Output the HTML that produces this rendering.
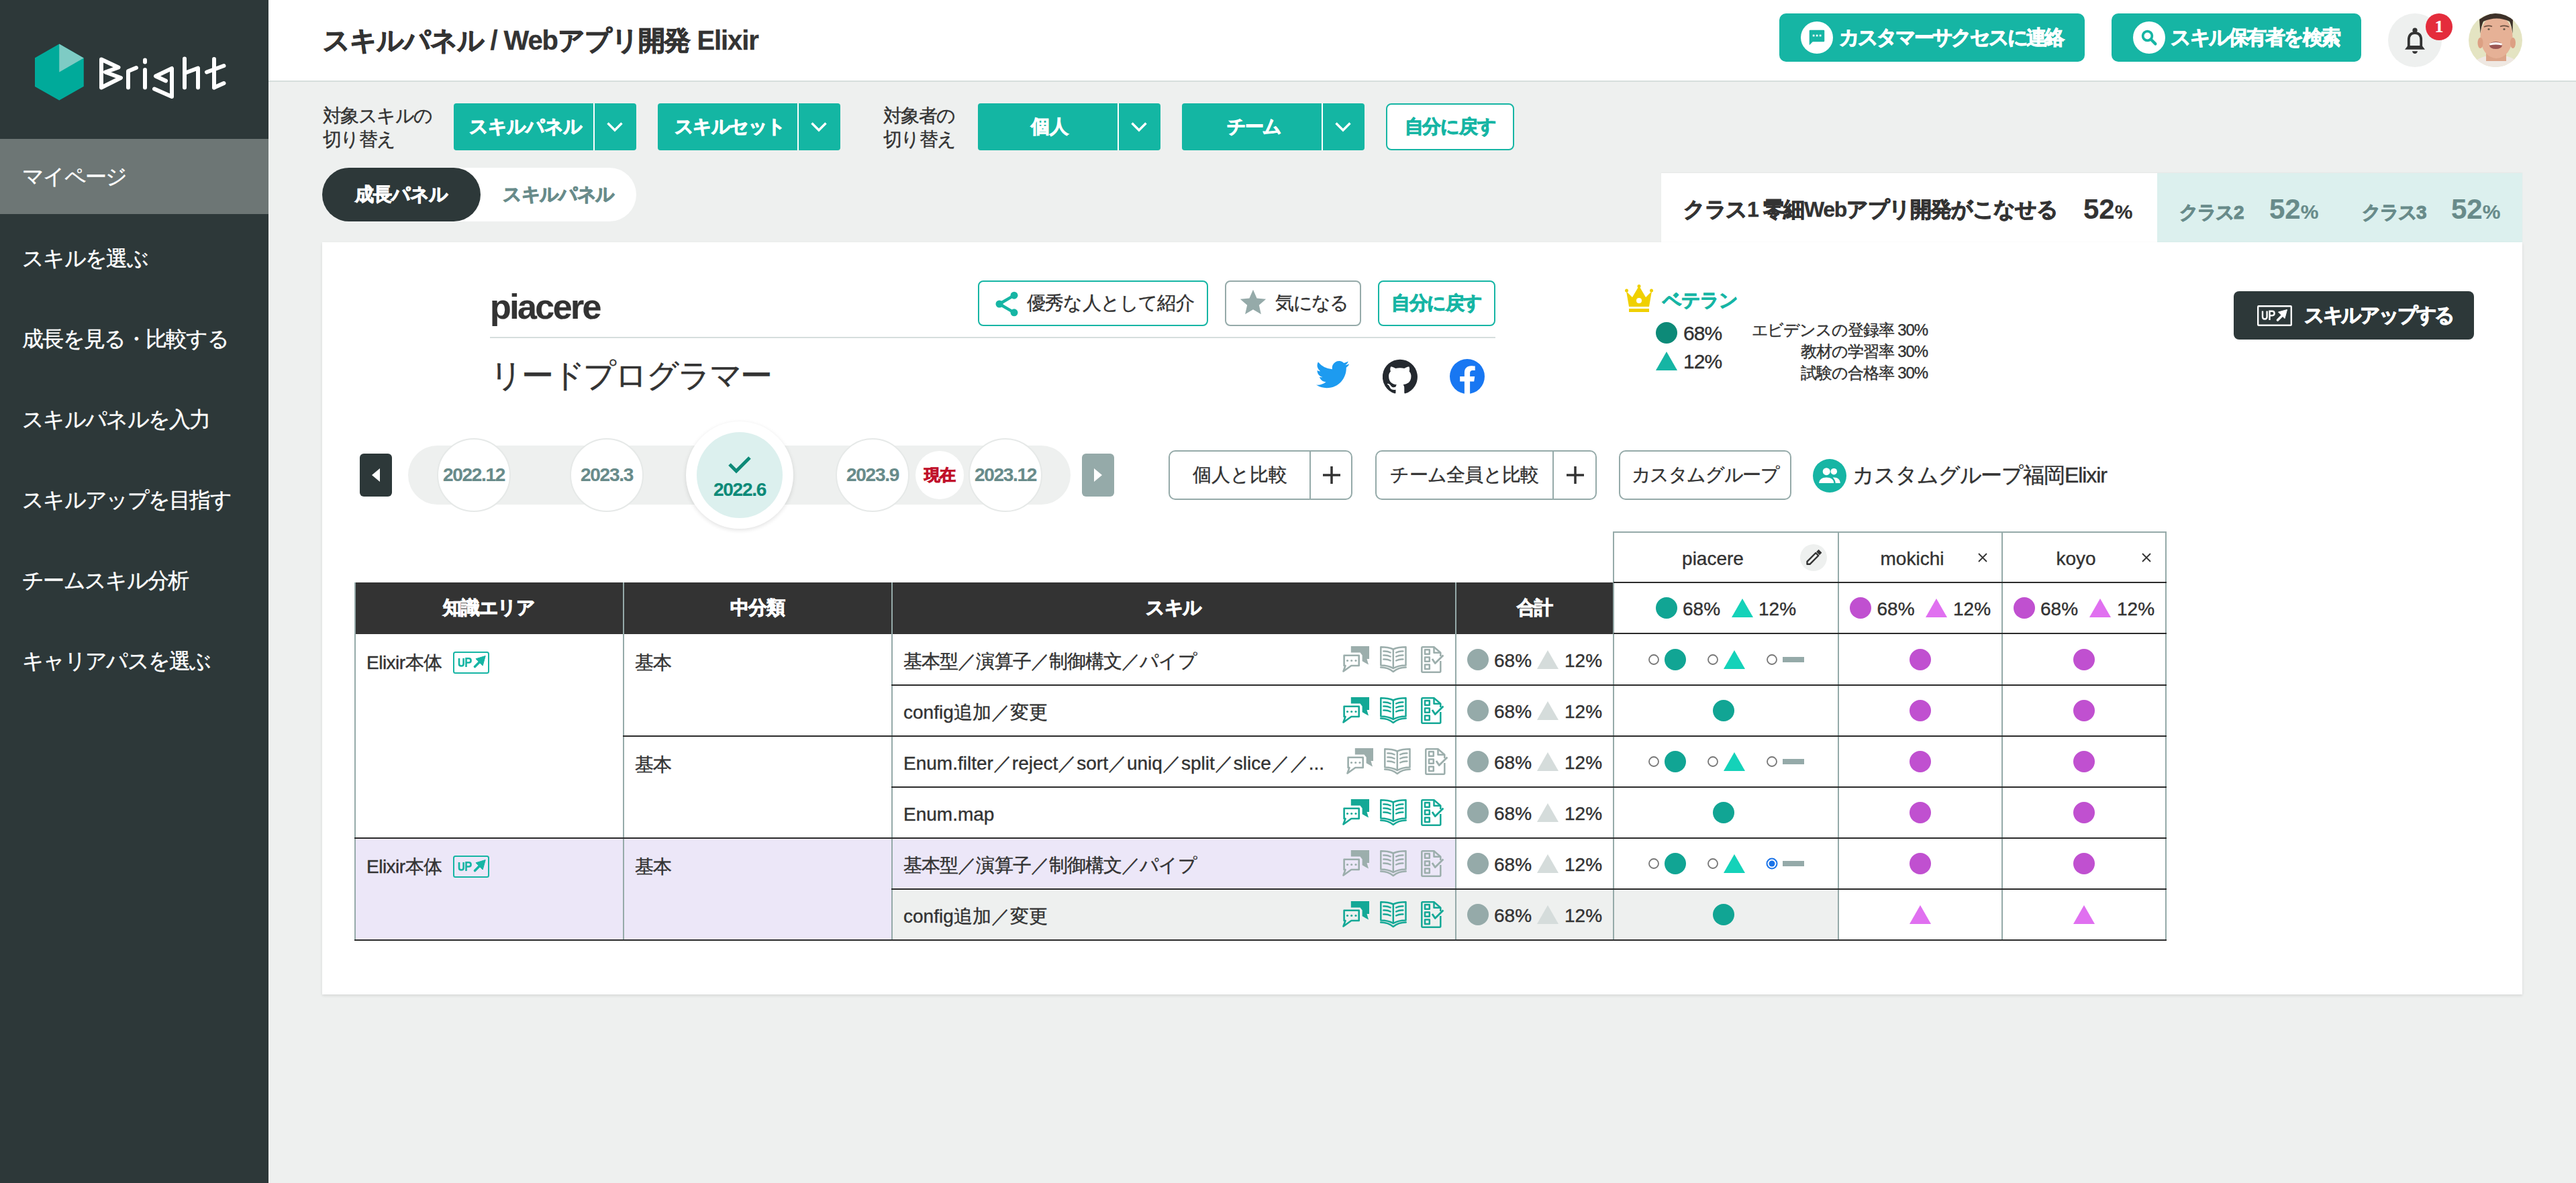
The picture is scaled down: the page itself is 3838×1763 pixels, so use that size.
<!DOCTYPE html>
<html><head><meta charset="utf-8">
<style>
*{box-sizing:border-box;margin:0;padding:0}
html,body{width:3838px;height:1763px;overflow:hidden}
body{position:relative;background:#eef0ef;font-family:"Liberation Sans",sans-serif;color:#333;-webkit-text-stroke:0.4px currentColor}
.a{position:absolute}
.c{display:flex;align-items:center;justify-content:center}
.w{color:#fff}
.b{font-weight:bold;-webkit-text-stroke:1px currentColor}
.lb{-webkit-text-stroke:0.2px currentColor}
.nav{position:absolute;left:0;width:400px;height:112px;line-height:112px;padding-left:33px;font-size:32px;letter-spacing:-1.7px;color:#fff;white-space:nowrap}
.tbtn{position:absolute;top:154px;height:70px;background:#14b6a3;border-radius:4px;color:#fff;font-weight:bold;font-size:28px;-webkit-text-stroke:1px #fff}
.tbtn .m{position:absolute;left:0;top:0;bottom:0;display:flex;align-items:center;justify-content:center}
.tbtn .d{position:absolute;right:0;top:0;bottom:0;width:64px;border-left:2px solid #fff;display:flex;align-items:center;justify-content:center}
.lbl{position:absolute;top:155px;font-size:28px;line-height:35px;color:#333;white-space:nowrap;letter-spacing:-1.6px}
.obtn{position:absolute;border:2px solid #16b5a4;border-radius:8px;background:#fff;display:flex;align-items:center;justify-content:center;white-space:nowrap}
.gbtn{position:absolute;border:2px solid #95aaa9;border-radius:10px;background:#fff;white-space:nowrap}
.circ{position:absolute;border-radius:50%}
.txt{position:absolute;white-space:nowrap}
</style></head><body>

<!-- SIDEBAR -->
<div class="a" style="left:0;top:0;width:400px;height:1763px;background:#2d3839"></div>
<svg class="a" style="left:0;top:0" width="400" height="200" viewBox="0 0 400 200">
  <polygon points="88.25,65.6 124.75,86.5 124.75,128.75 88.25,149.6 52,129 52,86.25" fill="#00aa9a"/>
  <polygon points="88.25,65.6 124.75,86.5 88.25,107.5" fill="#7ecbc4"/>
  <g fill="none" stroke="#fff" stroke-width="6" stroke-linejoin="round" stroke-linecap="round">
    <polyline points="151,130.5 151,88.5 176.5,100.5 157,107.5 180,116 151,130.5"/>
    <polyline points="191,130.5 191,106 203,101"/>
    <line x1="216" y1="89.5" x2="216" y2="92.5"/>
    <line x1="216" y1="104" x2="216" y2="130.5"/>
    <polyline points="247,120.5 232,113.5 256,102 256,144 230,132.5"/>
    <line x1="275" y1="87.5" x2="275" y2="130.5"/>
    <polyline points="275,109 295,101.5 295,130.5"/>
    <line x1="319" y1="88" x2="319" y2="130.5"/>
    <line x1="308" y1="107.5" x2="333.5" y2="98"/>
    <line x1="319" y1="130.5" x2="333.5" y2="124"/>
  </g>
</svg>
<div class="a" style="left:0;top:207px;width:400px;height:112px;background:#6d7675"></div>
<div class="nav" style="top:207px">マイページ</div>
<div class="nav" style="top:329px">スキルを選ぶ</div>
<div class="nav" style="top:449px">成長を見る・比較する</div>
<div class="nav" style="top:569px">スキルパネルを入力</div>
<div class="nav" style="top:689px">スキルアップを目指す</div>
<div class="nav" style="top:809px">チームスキル分析</div>
<div class="nav" style="top:929px">キャリアパスを選ぶ</div>

<!-- HEADER -->
<div class="a" style="left:400px;top:0;width:3438px;height:122px;background:#fff;border-bottom:2px solid #d6dedd"></div>
<div class="txt b" style="left:481px;top:30px;font-size:40px;line-height:60px;color:#333;letter-spacing:-1.1px">スキルパネル <span style="-webkit-text-stroke:0.3px currentColor">/ Web</span>アプリ開発 <span style="-webkit-text-stroke:0.3px currentColor">Elixir</span></div>

<div class="a c" style="left:2651px;top:20px;width:455px;height:72px;background:#16b5a4;border-radius:10px"></div>
<div class="circ c" style="left:2683px;top:32px;width:48px;height:48px;background:#fff">
  <svg width="30" height="30" viewBox="0 0 24 24"><path d="M4 3h16a1 1 0 0 1 1 1v12a1 1 0 0 1-1 1H7l-4 4V4a1 1 0 0 1 1-1z" fill="#16b5a4"/><rect x="7" y="8.5" width="2.2" height="2.2" fill="#fff"/><rect x="11" y="8.5" width="2.2" height="2.2" fill="#fff"/><rect x="15" y="8.5" width="2.2" height="2.2" fill="#fff"/></svg>
</div>
<div class="txt b w" style="left:2740px;top:36px;font-size:30px;line-height:40px;letter-spacing:-3px">カスタマーサクセスに連絡</div>

<div class="a" style="left:3146px;top:20px;width:372px;height:72px;background:#16b5a4;border-radius:10px"></div>
<div class="circ c" style="left:3178px;top:32px;width:48px;height:48px;background:#fff">
  <svg width="30" height="30" viewBox="0 0 24 24"><circle cx="10" cy="10" r="5.5" fill="none" stroke="#16b5a4" stroke-width="3"/><line x1="14" y1="14" x2="19.5" y2="19.5" stroke="#16b5a4" stroke-width="3.4" stroke-linecap="round"/></svg>
</div>
<div class="txt b w" style="left:3234px;top:36px;font-size:30px;line-height:40px;letter-spacing:-2.5px">スキル保有者を検索</div>

<div class="circ" style="left:3558px;top:20px;width:80px;height:80px;background:#eef0ef"></div>
<svg class="a" style="left:3582px;top:41px" width="32" height="40" viewBox="0 0 32 40"><path d="M6.8,30V18.5Q6.8,8.2 16,8.2Q25.2,8.2 25.2,18.5V30" fill="none" stroke="#333" stroke-width="3.8"/><path d="M1,32.8H31L26.5,27H5.5Z" fill="#333"/><circle cx="16" cy="4.2" r="3.6" fill="#333"/><path d="M12,35.2H20Q19.2,39 16,39Q12.8,39 12,35.2Z" fill="#333"/></svg>
<div class="circ c b w lb" style="left:3614px;top:20px;width:40px;height:40px;background:#e42c3c;font-size:26px;font-family:'Liberation Serif',serif">1</div>
<svg class="a" style="left:3678px;top:20px" width="80" height="80" viewBox="0 0 80 80"><defs><clipPath id="av"><circle cx="40" cy="40" r="40"/></clipPath></defs><g clip-path="url(#av)"><rect width="80" height="80" fill="#e4e4c2"/><path d="M0,80V76Q12,68 24,64H58Q70,68 80,76V80Z" fill="#efe8e2"/><rect x="26" y="55" width="30" height="16" fill="#dca488"/><ellipse cx="41.5" cy="35" rx="24" ry="32" fill="#e6b196"/><ellipse cx="17.5" cy="44" rx="4" ry="8" fill="#dca083"/><ellipse cx="66" cy="44" rx="4" ry="8" fill="#dca083"/><path d="M16,9Q30,-1 42,0Q58,-1 66,9L65.5,30Q64,18 61,12Q42,3 22,12Q19,18 17.5,30Z" fill="#3d3129"/><path d="M23,20Q29,17 35,19.5M47,19.5Q54,17 60,20" stroke="#6a5040" stroke-width="1.8" fill="none"/><circle cx="30" cy="23.5" r="1.6" fill="#6a5a4a"/><circle cx="53" cy="23.5" r="1.6" fill="#6a5a4a"/><ellipse cx="40.5" cy="47.5" rx="9.5" ry="5.5" fill="#9a5552"/><path d="M31,45Q40.5,41 50,45L49.5,47.5Q40.5,45.5 31.5,47.5Z" fill="#fff"/></g></svg>

<!-- FILTER ROW -->
<div class="lbl" style="left:481px">対象スキルの<br>切り替え</div>
<div class="tbtn" style="left:676px;width:272px"><div class="m" style="width:214px;letter-spacing:-1.1px">スキルパネル</div><div class="d"><svg width="24" height="15" viewBox="0 0 24 15" style="margin-left:-2px"><polyline points="1.5,1.5 12,12 22.5,1.5" fill="none" stroke="#fff" stroke-width="3.4"/></svg></div></div>
<div class="tbtn" style="left:980px;width:272px"><div class="m" style="width:214px;letter-spacing:-1.5px">スキルセット</div><div class="d"><svg width="24" height="15" viewBox="0 0 24 15" style="margin-left:-2px"><polyline points="1.5,1.5 12,12 22.5,1.5" fill="none" stroke="#fff" stroke-width="3.4"/></svg></div></div>
<div class="lbl" style="left:1316px">対象者の<br>切り替え</div>
<div class="tbtn" style="left:1457px;width:272px"><div class="m" style="width:214px">個人</div><div class="d"><svg width="24" height="15" viewBox="0 0 24 15" style="margin-left:-2px"><polyline points="1.5,1.5 12,12 22.5,1.5" fill="none" stroke="#fff" stroke-width="3.4"/></svg></div></div>
<div class="tbtn" style="left:1761px;width:272px"><div class="m" style="width:214px;letter-spacing:-1.8px">チーム</div><div class="d"><svg width="24" height="15" viewBox="0 0 24 15" style="margin-left:-2px"><polyline points="1.5,1.5 12,12 22.5,1.5" fill="none" stroke="#fff" stroke-width="3.4"/></svg></div></div>
<div class="obtn b" style="left:2065px;top:154px;width:191px;height:70px;font-size:28px;color:#16b5a4;letter-spacing:-1.3px">自分に戻す</div>

<!-- TABS -->
<div class="a" style="left:480px;top:250px;width:468px;height:80px;background:#fff;border-radius:40px"></div>
<div class="a c b w" style="left:480px;top:250px;width:236px;height:80px;background:#2d3839;border-radius:40px;font-size:28px;letter-spacing:-1px">成長パネル</div>
<div class="a c b" style="left:716px;top:250px;width:232px;height:80px;font-size:28px;color:#688b8a;letter-spacing:-1.3px">スキルパネル</div>

<!-- CLASS TABS -->
<div class="a" style="left:2475px;top:258px;width:739px;height:104px;background:#fff"></div>
<div class="a" style="left:3214px;top:258px;width:544px;height:104px;background:#dcf0ee"></div>
<div class="txt b" style="left:2508px;top:290px;font-size:32px;line-height:44px;color:#333;letter-spacing:-1.37px">クラス<span style="-webkit-text-stroke:0.3px currentColor">1 </span>零細<span style="-webkit-text-stroke:0.3px currentColor">Web</span>アプリ開発がこなせる</div>
<div class="txt b lb" style="left:3104px;top:287px;font-size:42px;line-height:50px;color:#333">52<span style="font-size:30px">%</span></div>
<div class="txt b" style="left:3247px;top:297px;font-size:28px;line-height:40px;color:#688b8a;letter-spacing:-2px">クラス2</div>
<div class="txt b lb" style="left:3381px;top:287px;font-size:42px;line-height:50px;color:#688b8a">52<span style="font-size:30px">%</span></div>
<div class="txt b" style="left:3519px;top:297px;font-size:28px;line-height:40px;color:#688b8a;letter-spacing:-2px">クラス3</div>
<div class="txt b lb" style="left:3652px;top:287px;font-size:42px;line-height:50px;color:#688b8a">52<span style="font-size:30px">%</span></div>

<!-- CARD -->
<div class="a" style="left:480px;top:361px;width:3278px;height:1121px;background:#fff;box-shadow:0 2px 4px rgba(0,0,0,0.1)"></div>
<div class="a" style="left:2475px;top:258px;width:1283px;height:104px;box-shadow:0 -1px 2px rgba(0,0,0,0.04)"></div>

<!-- name section -->
<div class="txt b lb" style="left:730px;top:422px;font-size:52px;line-height:70px;color:#333;letter-spacing:-2.6px">piacere</div>
<div class="obtn" style="left:1457px;top:418px;width:343px;height:68px;font-size:28px;color:#333;letter-spacing:-0.8px">
  <svg width="44" height="44" viewBox="0 0 24 24" style="margin-right:8px;margin-top:2px"><circle cx="18" cy="5" r="3" fill="#16b5a4"/><circle cx="6" cy="12" r="3" fill="#16b5a4"/><circle cx="18" cy="19" r="3" fill="#16b5a4"/><line x1="6" y1="12" x2="18" y2="5" stroke="#16b5a4" stroke-width="2.4"/><line x1="6" y1="12" x2="18" y2="19" stroke="#16b5a4" stroke-width="2.4"/></svg>優秀な人として紹介</div>
<div class="obtn" style="left:1825px;top:418px;width:203px;height:68px;font-size:28px;color:#333;border-color:#95aaa9;letter-spacing:-1.6px">
  <svg width="46" height="46" viewBox="0 0 24 24" style="margin-right:10px;margin-top:-2px"><polygon points="12,2 14.9,8.6 22,9.3 16.6,14 18.2,21 12,17.3 5.8,21 7.4,14 2,9.3 9.1,8.6" fill="#95aaa9"/></svg>気になる</div>
<div class="obtn b" style="left:2053px;top:418px;width:175px;height:68px;font-size:28px;color:#16b5a4;letter-spacing:-1.4px">自分に戻す</div>
<div class="a" style="left:730px;top:502px;width:1498px;height:2px;background:#d6dedd"></div>
<div class="txt" style="left:730px;top:528px;font-size:48px;line-height:64px;color:#333;letter-spacing:-2.2px">リードプログラマー</div>

<svg class="a" style="left:1961px;top:537px" width="50" height="46" viewBox="0 0 24 22"><path d="M23.6 2.6c-.9.4-1.8.6-2.8.8 1-.6 1.8-1.6 2.1-2.7-.9.6-2 1-3.1 1.2A4.9 4.9 0 0 0 11.5 6.3 13.9 13.9 0 0 1 1.4 1.2a4.9 4.9 0 0 0 1.5 6.5c-.8 0-1.6-.3-2.2-.6 0 2.4 1.7 4.4 3.9 4.8-.7.2-1.5.2-2.2.1.6 2 2.4 3.4 4.6 3.4A9.8 9.8 0 0 1 0 17.5 13.9 13.9 0 0 0 7.5 19.7c9.1 0 14-7.5 14-14v-.6c1-.7 1.8-1.6 2.1-2.5z" fill="#1d9bf0"/></svg>
<svg class="a" style="left:2060px;top:535px" width="52" height="52" viewBox="0 0 24 24"><path d="M12 .3a12 12 0 0 0-3.8 23.4c.6.1.8-.3.8-.6v-2c-3.3.7-4-1.6-4-1.6-.6-1.4-1.4-1.8-1.4-1.8-1-.7.1-.7.1-.7 1.2.1 1.8 1.2 1.8 1.2 1 1.8 2.8 1.3 3.5 1 .1-.8.4-1.3.7-1.6-2.7-.3-5.5-1.3-5.5-6 0-1.2.5-2.3 1.3-3.1-.2-.4-.6-1.6.1-3.2 0 0 1-.3 3.3 1.2a11.5 11.5 0 0 1 6 0c2.3-1.5 3.3-1.2 3.3-1.2.6 1.6.2 2.8.1 3.2.8.8 1.3 1.9 1.3 3.2 0 4.6-2.8 5.6-5.5 5.9.4.4.8 1.1.8 2.2v3.3c0 .3.2.7.8.6A12 12 0 0 0 12 .3" fill="#24292f"/></svg>
<svg class="a" style="left:2160px;top:535px" width="52" height="52" viewBox="0 0 24 24"><circle cx="12" cy="12" r="12" fill="#1877f2"/><path d="M16.7 15.5l.5-3.5h-3.3V9.8c0-1 .5-1.9 2-1.9h1.5v-3s-1.4-.2-2.7-.2c-2.8 0-4.6 1.7-4.6 4.7V12H7v3.5h3.1V24a12 12 0 0 0 3.8 0v-8.5h2.8z" fill="#fff"/></svg>

<!-- veteran -->
<svg class="a" style="left:2421px;top:424px" width="42" height="42" viewBox="0 0 42 42"><path d="M2 10l9 9 10-17 10 17 9-9-4 23H6z" fill="#f0d000"/><circle cx="2.5" cy="9" r="2.5" fill="#f0d000"/><circle cx="21" cy="2.5" r="2.5" fill="#f0d000"/><circle cx="39.5" cy="9" r="2.5" fill="#f0d000"/><rect x="6" y="36" width="30" height="5" fill="#f0d000"/><circle cx="21" cy="24" r="4" fill="#fff"/></svg>
<div class="txt b" style="left:2477px;top:428px;font-size:28px;line-height:40px;color:#16b5a4;letter-spacing:-1px">ベテラン</div>
<div class="circ" style="left:2467px;top:480px;width:32px;height:32px;background:#0d8a78"></div>
<div class="txt" style="left:2508px;top:477px;font-size:30px;line-height:40px;color:#333;letter-spacing:-0.9px">68%</div>
<svg class="a" style="left:2467px;top:524px" width="32" height="28" viewBox="0 0 32 28"><polygon points="16,0 32,28 0,28" fill="#16b5a4"/></svg>
<div class="txt" style="left:2508px;top:519px;font-size:30px;line-height:40px;color:#333;letter-spacing:-0.9px">12%</div>
<div class="txt" style="left:2572px;top:476px;width:300px;text-align:right;font-size:24px;line-height:32px;color:#333;letter-spacing:-1.1px">エビデンスの登録率 30%<br>教材の学習率 30%<br>試験の合格率 30%</div>

<div class="a c b w" style="left:3328px;top:434px;width:358px;height:72px;background:#2d3839;border-radius:8px;font-size:30px;letter-spacing:-3.2px">
  <svg width="52" height="31" viewBox="0 0 52 31" style="margin-right:18px;margin-left:4px"><rect x="1.2" y="1.2" width="49.6" height="28.6" rx="1" fill="none" stroke="#fff" stroke-width="2.4"/><path d="M8,8.5V17Q8,20.5 11.3,20.5Q14.6,20.5 14.6,17V8.5" fill="none" stroke="#fff" stroke-width="2.4"/><path d="M18.5,22V8.8H22.3Q25.6,8.8 25.6,12Q25.6,15.2 22.3,15.2H18.5" fill="none" stroke="#fff" stroke-width="2.4"/><path d="M30.5,22L38,14.5" stroke="#fff" stroke-width="3.6" stroke-linecap="round"/><path d="M44.5,6.5L31.5,10L41,19.5Z" fill="#fff" stroke="#fff" stroke-width="1" stroke-linejoin="round"/></svg>スキルアップする</div>

<!-- TIMELINE -->
<div class="a c" style="left:536px;top:676px;width:48px;height:64px;background:#2d3839;border-radius:6px"><svg width="16" height="22" viewBox="0 0 16 22"><polygon points="14,1 2,11 14,21" fill="#fff"/></svg></div>
<div class="a" style="left:608px;top:664px;width:987px;height:88px;background:#eef0ef;border-radius:44px"></div>
<div class="circ c b lb" style="left:651px;top:653px;width:110px;height:110px;background:#fff;border:2px solid #e6e9e8;font-size:28px;color:#688b8a;letter-spacing:-1.35px">2022.12</div>
<div class="circ c b lb" style="left:849px;top:653px;width:110px;height:110px;background:#fff;border:2px solid #e6e9e8;font-size:28px;color:#688b8a;letter-spacing:-1.3px">2023.3</div>
<div class="circ" style="left:1022px;top:628px;width:160px;height:160px;background:#fff;box-shadow:0 2px 6px rgba(0,0,0,0.12)"></div>
<div class="circ" style="left:1038px;top:644px;width:128px;height:128px;background:#dcf0ee"></div>
<svg class="a" style="left:1084px;top:679px" width="36" height="28" viewBox="0 0 36 28"><polyline points="3,13 13,23 33,3" fill="none" stroke="#0d8a78" stroke-width="5"/></svg>
<div class="txt b lb" style="left:1038px;top:712px;width:128px;text-align:center;font-size:28px;line-height:36px;color:#0d8a78;letter-spacing:-1.3px">2022.6</div>
<div class="circ c b lb" style="left:1245px;top:653px;width:110px;height:110px;background:#fff;border:2px solid #e6e9e8;font-size:28px;color:#688b8a;letter-spacing:-1.25px">2023.9</div>
<div class="circ c b" style="left:1364px;top:672px;width:72px;height:72px;background:#fff;font-size:24px;color:#c0102a;letter-spacing:-1px">現在</div>
<div class="circ c b lb" style="left:1443px;top:653px;width:110px;height:110px;background:#fff;border:2px solid #e6e9e8;font-size:28px;color:#688b8a;letter-spacing:-1.35px">2023.12</div>
<div class="a c" style="left:1612px;top:676px;width:48px;height:64px;background:#95aaa9;border-radius:6px"><svg width="16" height="22" viewBox="0 0 16 22"><polygon points="2,1 14,11 2,21" fill="#fff"/></svg></div>

<!-- COMPARE -->
<div class="gbtn" style="left:1741px;top:671px;width:274px;height:74px"><div class="a c" style="left:0;top:0;width:208px;height:70px;font-size:28px">個人と比較</div><div class="a c" style="left:208px;top:0;width:64px;height:70px;border-left:2px solid #95aaa9"><svg width="30" height="30" viewBox="0 0 30 30"><path d="M15 2v26M2 15h26" stroke="#333" stroke-width="3.5"/></svg></div></div>
<div class="gbtn" style="left:2049px;top:671px;width:330px;height:74px"><div class="a c" style="left:0;top:0;width:262px;height:70px;font-size:28px;letter-spacing:-0.7px">チーム全員と比較</div><div class="a c" style="left:262px;top:0;width:66px;height:70px;border-left:2px solid #95aaa9"><svg width="30" height="30" viewBox="0 0 30 30"><path d="M15 2v26M2 15h26" stroke="#333" stroke-width="3.5"/></svg></div></div>
<div class="gbtn c" style="left:2412px;top:671px;width:257px;height:74px;font-size:28px;letter-spacing:-1.4px">カスタムグループ</div>
<div class="circ c" style="left:2701px;top:684px;width:50px;height:50px;background:#16b5a4"><svg width="38" height="38" viewBox="0 0 24 24"><circle cx="9" cy="8" r="3.5" fill="#fff"/><circle cx="16" cy="8" r="3" fill="#fff"/><path d="M2 19c0-3.5 3-5.5 7-5.5s7 2 7 5.5z" fill="#fff"/><path d="M16 13.5c3.5 0 6 2 6 5.5h-4.5c0-2-1-4-2.5-5.5z" fill="#fff"/></svg></div>
<div class="txt" style="left:2760px;top:688px;font-size:32px;line-height:40px;color:#333;letter-spacing:-1.1px">カスタムグループ福岡Elixir</div>

<!-- TABLE -->
<div class="a" style="left:529px;top:868px;width:1875px;height:77px;background:#333333;"></div>
<div class="a" style="left:529px;top:1249px;width:1640px;height:76px;background:#ece7f8;"></div>
<div class="a" style="left:529px;top:1325px;width:799px;height:76px;background:#ece7f8;"></div>
<div class="a" style="left:1328px;top:1325px;width:1411px;height:76px;background:#eef0ef;"></div>
<div class="txt" style="left:529px;top:886px;width:399px;text-align:center;font-size:28px;line-height:40px;color:#fff;letter-spacing:-1.1px;font-weight:bold;-webkit-text-stroke:1px currentColor;">知識エリア</div>
<div class="txt" style="left:928px;top:886px;width:400px;text-align:center;font-size:28px;line-height:40px;color:#fff;letter-spacing:-1px;font-weight:bold;-webkit-text-stroke:1px currentColor;">中分類</div>
<div class="txt" style="left:1328px;top:886px;width:841px;text-align:center;font-size:28px;line-height:40px;color:#fff;letter-spacing:-1.6px;font-weight:bold;-webkit-text-stroke:1px currentColor;">スキル</div>
<div class="txt" style="left:2169px;top:886px;width:235px;text-align:center;font-size:28px;line-height:40px;color:#fff;letter-spacing:-1.2px;font-weight:bold;-webkit-text-stroke:1px currentColor;">合計</div>
<div class="txt" style="left:2404px;top:813px;width:296px;text-align:center;font-size:28px;line-height:40px;color:#333;letter-spacing:0px;">piacere</div>
<div class="circ c" style="left:2682px;top:811px;width:40px;height:40px;background:#eef0ef"><svg width="40" height="40" viewBox="0 0 40 40"><path d="M10.5,25.8L23.3,13L27.3,17L14.5,29.8H10.5Z" fill="none" stroke="#333" stroke-width="2.4" stroke-linejoin="round"/><path d="M25,11.3L27.6,8.7L31.6,12.7L29,15.3Z" fill="#333" stroke="#333" stroke-width="1.2" stroke-linejoin="round"/></svg></div>
<div class="txt" style="left:2739px;top:813px;width:220px;text-align:center;font-size:28px;line-height:40px;color:#333;letter-spacing:0px;">mokichi</div>
<div class="txt" style="left:2983px;top:813px;width:220px;text-align:center;font-size:28px;line-height:40px;color:#333;letter-spacing:0px;">koyo</div>
<svg class="a" style="left:2945px;top:822px" width="18" height="18" viewBox="0 0 18 18"><path d="M3,3L15,15M15,3L3,15" stroke="#333" stroke-width="1.8"/></svg>
<svg class="a" style="left:3189px;top:822px" width="18" height="18" viewBox="0 0 18 18"><path d="M3,3L15,15M15,3L3,15" stroke="#333" stroke-width="1.8"/></svg>
<div class="circ" style="left:2467.0px;top:890.0px;width:32px;height:32px;background:#11a594"></div>
<div class="txt" style="left:2507px;top:888px;font-size:28px;line-height:40px;color:#333;">68%</div>
<svg class="a" style="left:2579.5px;top:892.0px" width="32" height="28" viewBox="0 0 32 28"><polygon points="16,0 32,28 0,28" fill="#14d2b9"/></svg>
<div class="txt" style="left:2620px;top:888px;font-size:28px;line-height:40px;color:#333;">12%</div>
<div class="circ" style="left:2755.5px;top:890.0px;width:32px;height:32px;background:#c050d0"></div>
<div class="txt" style="left:2796.5px;top:888px;font-size:28px;line-height:40px;color:#333;">68%</div>
<svg class="a" style="left:2868.5px;top:892.0px" width="32" height="28" viewBox="0 0 32 28"><polygon points="16,0 32,28 0,28" fill="#e070f0"/></svg>
<div class="txt" style="left:2910px;top:888px;font-size:28px;line-height:40px;color:#333;">12%</div>
<div class="circ" style="left:3000.0px;top:890.0px;width:32px;height:32px;background:#c050d0"></div>
<div class="txt" style="left:3040px;top:888px;font-size:28px;line-height:40px;color:#333;">68%</div>
<svg class="a" style="left:3112.5px;top:892.0px" width="32" height="28" viewBox="0 0 32 28"><polygon points="16,0 32,28 0,28" fill="#e070f0"/></svg>
<div class="txt" style="left:3154px;top:888px;font-size:28px;line-height:40px;color:#333;">12%</div>
<div class="txt" style="left:1346px;top:966px;font-size:28px;line-height:40px;color:#333;letter-spacing:-0.9px">基本型／演算子／制御構文／パイプ</div>
<svg class="a" style="left:2000px;top:963px" width="40" height="40" viewBox="0 0 40 40"><path d="M12.8,0H40V19H36.5L39,27.6L29.6,22.3V13.5L26.5,9.5H12.8Z" fill="#9caeac"/><path d="M2.6,13.7H24.7V29H13.3L1.5,37.5L4.5,29H2.6Z" fill="none" stroke="#9caeac" stroke-width="2.6" stroke-linejoin="round"/><circle cx="7.5" cy="21.5" r="1.6" fill="#9caeac"/><circle cx="13.7" cy="21.5" r="1.6" fill="#9caeac"/><circle cx="20" cy="21.5" r="1.6" fill="#9caeac"/></svg>
<svg class="a" style="left:2056px;top:963px" width="40" height="40" viewBox="0 0 40 40"><g fill="none" stroke="#9caeac" stroke-width="2.5" stroke-linecap="round" stroke-linejoin="round"><path d="M1.3,1.3Q12,1.3 19.8,4.5Q27.5,1.3 38.5,1.3V28.5Q27.5,28.5 19.8,33Q12,28.5 1.3,28.5Z"/><path d="M19.8,4.5V33"/><path d="M1,31.5Q12,31.5 19.8,38Q27.5,31.5 38.7,31.5"/><path d="M5.3,7.5Q11,7 15.6,9.5M5.3,13.5Q11,13 15.6,15.5M5.3,19.5Q11,19 15.6,21.5"/><path d="M24.1,9.5Q29,7 34.5,7.5M24.1,15.5Q29,13 34.5,13.5M24.1,21.5Q29,19 34.5,19.5"/></g></svg>
<svg class="a" style="left:2117px;top:963px" width="35" height="40" viewBox="0 0 35 40"><g fill="none" stroke="#9caeac" stroke-width="2.5" stroke-linejoin="round"><path d="M29.3,15V9.8L19.5,1.3H2.7Q1.3,1.3 1.3,2.7V37.3Q1.3,38.7 2.7,38.7H27.9Q29.3,38.7 29.3,37.3V22"/><path d="M19.5,1.3V9.8H29.3"/><rect x="6" y="5.3" width="6.8" height="6.4"/><rect x="6" y="16.4" width="6.8" height="6.4"/><rect x="6" y="27.6" width="6.8" height="6.4"/><path d="M16.9,19L21.2,25.5L33.4,13.4" stroke-width="2.8"/></g></svg>
<div class="circ" style="left:2186.0px;top:967.0px;width:32px;height:32px;background:#95aaa9"></div>
<div class="txt" style="left:2226px;top:965px;font-size:28px;line-height:40px;color:#333;">68%</div>
<svg class="a" style="left:2290.0px;top:969.0px" width="32" height="28" viewBox="0 0 32 28"><polygon points="16,0 32,28 0,28" fill="#d5dcdb"/></svg>
<div class="txt" style="left:2331px;top:965px;font-size:28px;line-height:40px;color:#333;">12%</div>
<svg class="a" style="left:2454.5px;top:974px" width="18" height="18" viewBox="0 0 18 18"><circle cx="9" cy="9" r="7" fill="#fff" stroke="#777" stroke-width="1.8"/></svg>
<div class="circ" style="left:2479.5px;top:967.0px;width:32px;height:32px;background:#11a594"></div>
<svg class="a" style="left:2542.5px;top:974px" width="18" height="18" viewBox="0 0 18 18"><circle cx="9" cy="9" r="7" fill="#fff" stroke="#777" stroke-width="1.8"/></svg>
<svg class="a" style="left:2568.0px;top:969.0px" width="32" height="28" viewBox="0 0 32 28"><polygon points="16,0 32,28 0,28" fill="#14d2b9"/></svg>
<svg class="a" style="left:2630.5px;top:974px" width="18" height="18" viewBox="0 0 18 18"><circle cx="9" cy="9" r="7" fill="#fff" stroke="#777" stroke-width="1.8"/></svg>
<div class="a" style="left:2656px;top:979px;width:32px;height:8px;background:#95aaa9;"></div>
<div class="circ" style="left:2845.0px;top:967.0px;width:32px;height:32px;background:#c050d0"></div>
<div class="circ" style="left:3089.0px;top:967.0px;width:32px;height:32px;background:#c050d0"></div>
<div class="txt" style="left:1346px;top:1042px;font-size:28px;line-height:40px;color:#333;">config追加／変更</div>
<svg class="a" style="left:2000px;top:1039px" width="40" height="40" viewBox="0 0 40 40"><path d="M12.8,0H40V19H36.5L39,27.6L29.6,22.3V13.5L26.5,9.5H12.8Z" fill="#14a896"/><path d="M2.6,13.7H24.7V29H13.3L1.5,37.5L4.5,29H2.6Z" fill="none" stroke="#14a896" stroke-width="2.6" stroke-linejoin="round"/><circle cx="7.5" cy="21.5" r="1.6" fill="#14a896"/><circle cx="13.7" cy="21.5" r="1.6" fill="#14a896"/><circle cx="20" cy="21.5" r="1.6" fill="#14a896"/></svg>
<svg class="a" style="left:2056px;top:1039px" width="40" height="40" viewBox="0 0 40 40"><g fill="none" stroke="#14a896" stroke-width="2.5" stroke-linecap="round" stroke-linejoin="round"><path d="M1.3,1.3Q12,1.3 19.8,4.5Q27.5,1.3 38.5,1.3V28.5Q27.5,28.5 19.8,33Q12,28.5 1.3,28.5Z"/><path d="M19.8,4.5V33"/><path d="M1,31.5Q12,31.5 19.8,38Q27.5,31.5 38.7,31.5"/><path d="M5.3,7.5Q11,7 15.6,9.5M5.3,13.5Q11,13 15.6,15.5M5.3,19.5Q11,19 15.6,21.5"/><path d="M24.1,9.5Q29,7 34.5,7.5M24.1,15.5Q29,13 34.5,13.5M24.1,21.5Q29,19 34.5,19.5"/></g></svg>
<svg class="a" style="left:2117px;top:1039px" width="35" height="40" viewBox="0 0 35 40"><g fill="none" stroke="#14a896" stroke-width="2.5" stroke-linejoin="round"><path d="M29.3,15V9.8L19.5,1.3H2.7Q1.3,1.3 1.3,2.7V37.3Q1.3,38.7 2.7,38.7H27.9Q29.3,38.7 29.3,37.3V22"/><path d="M19.5,1.3V9.8H29.3"/><rect x="6" y="5.3" width="6.8" height="6.4"/><rect x="6" y="16.4" width="6.8" height="6.4"/><rect x="6" y="27.6" width="6.8" height="6.4"/><path d="M16.9,19L21.2,25.5L33.4,13.4" stroke-width="2.8"/></g></svg>
<div class="circ" style="left:2186.0px;top:1043.0px;width:32px;height:32px;background:#95aaa9"></div>
<div class="txt" style="left:2226px;top:1041px;font-size:28px;line-height:40px;color:#333;">68%</div>
<svg class="a" style="left:2290.0px;top:1045.0px" width="32" height="28" viewBox="0 0 32 28"><polygon points="16,0 32,28 0,28" fill="#d5dcdb"/></svg>
<div class="txt" style="left:2331px;top:1041px;font-size:28px;line-height:40px;color:#333;">12%</div>
<div class="circ" style="left:2552.0px;top:1043.0px;width:32px;height:32px;background:#11a594"></div>
<div class="circ" style="left:2845.0px;top:1043.0px;width:32px;height:32px;background:#c050d0"></div>
<div class="circ" style="left:3089.0px;top:1043.0px;width:32px;height:32px;background:#c050d0"></div>
<div class="txt" style="left:1346px;top:1118px;font-size:28px;line-height:40px;color:#333;">Enum.filter／reject／sort／uniq／split／slice／／...</div>
<svg class="a" style="left:2006px;top:1115px" width="40" height="40" viewBox="0 0 40 40"><path d="M12.8,0H40V19H36.5L39,27.6L29.6,22.3V13.5L26.5,9.5H12.8Z" fill="#9caeac"/><path d="M2.6,13.7H24.7V29H13.3L1.5,37.5L4.5,29H2.6Z" fill="none" stroke="#9caeac" stroke-width="2.6" stroke-linejoin="round"/><circle cx="7.5" cy="21.5" r="1.6" fill="#9caeac"/><circle cx="13.7" cy="21.5" r="1.6" fill="#9caeac"/><circle cx="20" cy="21.5" r="1.6" fill="#9caeac"/></svg>
<svg class="a" style="left:2062px;top:1115px" width="40" height="40" viewBox="0 0 40 40"><g fill="none" stroke="#9caeac" stroke-width="2.5" stroke-linecap="round" stroke-linejoin="round"><path d="M1.3,1.3Q12,1.3 19.8,4.5Q27.5,1.3 38.5,1.3V28.5Q27.5,28.5 19.8,33Q12,28.5 1.3,28.5Z"/><path d="M19.8,4.5V33"/><path d="M1,31.5Q12,31.5 19.8,38Q27.5,31.5 38.7,31.5"/><path d="M5.3,7.5Q11,7 15.6,9.5M5.3,13.5Q11,13 15.6,15.5M5.3,19.5Q11,19 15.6,21.5"/><path d="M24.1,9.5Q29,7 34.5,7.5M24.1,15.5Q29,13 34.5,13.5M24.1,21.5Q29,19 34.5,19.5"/></g></svg>
<svg class="a" style="left:2123px;top:1115px" width="35" height="40" viewBox="0 0 35 40"><g fill="none" stroke="#9caeac" stroke-width="2.5" stroke-linejoin="round"><path d="M29.3,15V9.8L19.5,1.3H2.7Q1.3,1.3 1.3,2.7V37.3Q1.3,38.7 2.7,38.7H27.9Q29.3,38.7 29.3,37.3V22"/><path d="M19.5,1.3V9.8H29.3"/><rect x="6" y="5.3" width="6.8" height="6.4"/><rect x="6" y="16.4" width="6.8" height="6.4"/><rect x="6" y="27.6" width="6.8" height="6.4"/><path d="M16.9,19L21.2,25.5L33.4,13.4" stroke-width="2.8"/></g></svg>
<div class="circ" style="left:2186.0px;top:1119.0px;width:32px;height:32px;background:#95aaa9"></div>
<div class="txt" style="left:2226px;top:1117px;font-size:28px;line-height:40px;color:#333;">68%</div>
<svg class="a" style="left:2290.0px;top:1121.0px" width="32" height="28" viewBox="0 0 32 28"><polygon points="16,0 32,28 0,28" fill="#d5dcdb"/></svg>
<div class="txt" style="left:2331px;top:1117px;font-size:28px;line-height:40px;color:#333;">12%</div>
<svg class="a" style="left:2454.5px;top:1126px" width="18" height="18" viewBox="0 0 18 18"><circle cx="9" cy="9" r="7" fill="#fff" stroke="#777" stroke-width="1.8"/></svg>
<div class="circ" style="left:2479.5px;top:1119.0px;width:32px;height:32px;background:#11a594"></div>
<svg class="a" style="left:2542.5px;top:1126px" width="18" height="18" viewBox="0 0 18 18"><circle cx="9" cy="9" r="7" fill="#fff" stroke="#777" stroke-width="1.8"/></svg>
<svg class="a" style="left:2568.0px;top:1121.0px" width="32" height="28" viewBox="0 0 32 28"><polygon points="16,0 32,28 0,28" fill="#14d2b9"/></svg>
<svg class="a" style="left:2630.5px;top:1126px" width="18" height="18" viewBox="0 0 18 18"><circle cx="9" cy="9" r="7" fill="#fff" stroke="#777" stroke-width="1.8"/></svg>
<div class="a" style="left:2656px;top:1131px;width:32px;height:8px;background:#95aaa9;"></div>
<div class="circ" style="left:2845.0px;top:1119.0px;width:32px;height:32px;background:#c050d0"></div>
<div class="circ" style="left:3089.0px;top:1119.0px;width:32px;height:32px;background:#c050d0"></div>
<div class="txt" style="left:1346px;top:1194px;font-size:28px;line-height:40px;color:#333;">Enum.map</div>
<svg class="a" style="left:2000px;top:1191px" width="40" height="40" viewBox="0 0 40 40"><path d="M12.8,0H40V19H36.5L39,27.6L29.6,22.3V13.5L26.5,9.5H12.8Z" fill="#14a896"/><path d="M2.6,13.7H24.7V29H13.3L1.5,37.5L4.5,29H2.6Z" fill="none" stroke="#14a896" stroke-width="2.6" stroke-linejoin="round"/><circle cx="7.5" cy="21.5" r="1.6" fill="#14a896"/><circle cx="13.7" cy="21.5" r="1.6" fill="#14a896"/><circle cx="20" cy="21.5" r="1.6" fill="#14a896"/></svg>
<svg class="a" style="left:2056px;top:1191px" width="40" height="40" viewBox="0 0 40 40"><g fill="none" stroke="#14a896" stroke-width="2.5" stroke-linecap="round" stroke-linejoin="round"><path d="M1.3,1.3Q12,1.3 19.8,4.5Q27.5,1.3 38.5,1.3V28.5Q27.5,28.5 19.8,33Q12,28.5 1.3,28.5Z"/><path d="M19.8,4.5V33"/><path d="M1,31.5Q12,31.5 19.8,38Q27.5,31.5 38.7,31.5"/><path d="M5.3,7.5Q11,7 15.6,9.5M5.3,13.5Q11,13 15.6,15.5M5.3,19.5Q11,19 15.6,21.5"/><path d="M24.1,9.5Q29,7 34.5,7.5M24.1,15.5Q29,13 34.5,13.5M24.1,21.5Q29,19 34.5,19.5"/></g></svg>
<svg class="a" style="left:2117px;top:1191px" width="35" height="40" viewBox="0 0 35 40"><g fill="none" stroke="#14a896" stroke-width="2.5" stroke-linejoin="round"><path d="M29.3,15V9.8L19.5,1.3H2.7Q1.3,1.3 1.3,2.7V37.3Q1.3,38.7 2.7,38.7H27.9Q29.3,38.7 29.3,37.3V22"/><path d="M19.5,1.3V9.8H29.3"/><rect x="6" y="5.3" width="6.8" height="6.4"/><rect x="6" y="16.4" width="6.8" height="6.4"/><rect x="6" y="27.6" width="6.8" height="6.4"/><path d="M16.9,19L21.2,25.5L33.4,13.4" stroke-width="2.8"/></g></svg>
<div class="circ" style="left:2186.0px;top:1195.0px;width:32px;height:32px;background:#95aaa9"></div>
<div class="txt" style="left:2226px;top:1193px;font-size:28px;line-height:40px;color:#333;">68%</div>
<svg class="a" style="left:2290.0px;top:1197.0px" width="32" height="28" viewBox="0 0 32 28"><polygon points="16,0 32,28 0,28" fill="#d5dcdb"/></svg>
<div class="txt" style="left:2331px;top:1193px;font-size:28px;line-height:40px;color:#333;">12%</div>
<div class="circ" style="left:2552.0px;top:1195.0px;width:32px;height:32px;background:#11a594"></div>
<div class="circ" style="left:2845.0px;top:1195.0px;width:32px;height:32px;background:#c050d0"></div>
<div class="circ" style="left:3089.0px;top:1195.0px;width:32px;height:32px;background:#c050d0"></div>
<div class="txt" style="left:1346px;top:1270px;font-size:28px;line-height:40px;color:#333;letter-spacing:-0.9px">基本型／演算子／制御構文／パイプ</div>
<svg class="a" style="left:2000px;top:1267px" width="40" height="40" viewBox="0 0 40 40"><path d="M12.8,0H40V19H36.5L39,27.6L29.6,22.3V13.5L26.5,9.5H12.8Z" fill="#9caeac"/><path d="M2.6,13.7H24.7V29H13.3L1.5,37.5L4.5,29H2.6Z" fill="none" stroke="#9caeac" stroke-width="2.6" stroke-linejoin="round"/><circle cx="7.5" cy="21.5" r="1.6" fill="#9caeac"/><circle cx="13.7" cy="21.5" r="1.6" fill="#9caeac"/><circle cx="20" cy="21.5" r="1.6" fill="#9caeac"/></svg>
<svg class="a" style="left:2056px;top:1267px" width="40" height="40" viewBox="0 0 40 40"><g fill="none" stroke="#9caeac" stroke-width="2.5" stroke-linecap="round" stroke-linejoin="round"><path d="M1.3,1.3Q12,1.3 19.8,4.5Q27.5,1.3 38.5,1.3V28.5Q27.5,28.5 19.8,33Q12,28.5 1.3,28.5Z"/><path d="M19.8,4.5V33"/><path d="M1,31.5Q12,31.5 19.8,38Q27.5,31.5 38.7,31.5"/><path d="M5.3,7.5Q11,7 15.6,9.5M5.3,13.5Q11,13 15.6,15.5M5.3,19.5Q11,19 15.6,21.5"/><path d="M24.1,9.5Q29,7 34.5,7.5M24.1,15.5Q29,13 34.5,13.5M24.1,21.5Q29,19 34.5,19.5"/></g></svg>
<svg class="a" style="left:2117px;top:1267px" width="35" height="40" viewBox="0 0 35 40"><g fill="none" stroke="#9caeac" stroke-width="2.5" stroke-linejoin="round"><path d="M29.3,15V9.8L19.5,1.3H2.7Q1.3,1.3 1.3,2.7V37.3Q1.3,38.7 2.7,38.7H27.9Q29.3,38.7 29.3,37.3V22"/><path d="M19.5,1.3V9.8H29.3"/><rect x="6" y="5.3" width="6.8" height="6.4"/><rect x="6" y="16.4" width="6.8" height="6.4"/><rect x="6" y="27.6" width="6.8" height="6.4"/><path d="M16.9,19L21.2,25.5L33.4,13.4" stroke-width="2.8"/></g></svg>
<div class="circ" style="left:2186.0px;top:1271.0px;width:32px;height:32px;background:#95aaa9"></div>
<div class="txt" style="left:2226px;top:1269px;font-size:28px;line-height:40px;color:#333;">68%</div>
<svg class="a" style="left:2290.0px;top:1273.0px" width="32" height="28" viewBox="0 0 32 28"><polygon points="16,0 32,28 0,28" fill="#d5dcdb"/></svg>
<div class="txt" style="left:2331px;top:1269px;font-size:28px;line-height:40px;color:#333;">12%</div>
<svg class="a" style="left:2454.5px;top:1278px" width="18" height="18" viewBox="0 0 18 18"><circle cx="9" cy="9" r="7" fill="#fff" stroke="#777" stroke-width="1.8"/></svg>
<div class="circ" style="left:2479.5px;top:1271.0px;width:32px;height:32px;background:#11a594"></div>
<svg class="a" style="left:2542.5px;top:1278px" width="18" height="18" viewBox="0 0 18 18"><circle cx="9" cy="9" r="7" fill="#fff" stroke="#777" stroke-width="1.8"/></svg>
<svg class="a" style="left:2568.0px;top:1273.0px" width="32" height="28" viewBox="0 0 32 28"><polygon points="16,0 32,28 0,28" fill="#14d2b9"/></svg>
<svg class="a" style="left:2630.5px;top:1278px" width="18" height="18" viewBox="0 0 18 18"><circle cx="9" cy="9" r="7.5" fill="#fff" stroke="#1a73e8" stroke-width="2"/><circle cx="9" cy="9" r="4.5" fill="#1a73e8"/></svg>
<div class="a" style="left:2656px;top:1283px;width:32px;height:8px;background:#95aaa9;"></div>
<div class="circ" style="left:2845.0px;top:1271.0px;width:32px;height:32px;background:#c050d0"></div>
<div class="circ" style="left:3089.0px;top:1271.0px;width:32px;height:32px;background:#c050d0"></div>
<div class="txt" style="left:1346px;top:1346px;font-size:28px;line-height:40px;color:#333;">config追加／変更</div>
<svg class="a" style="left:2000px;top:1343px" width="40" height="40" viewBox="0 0 40 40"><path d="M12.8,0H40V19H36.5L39,27.6L29.6,22.3V13.5L26.5,9.5H12.8Z" fill="#14a896"/><path d="M2.6,13.7H24.7V29H13.3L1.5,37.5L4.5,29H2.6Z" fill="none" stroke="#14a896" stroke-width="2.6" stroke-linejoin="round"/><circle cx="7.5" cy="21.5" r="1.6" fill="#14a896"/><circle cx="13.7" cy="21.5" r="1.6" fill="#14a896"/><circle cx="20" cy="21.5" r="1.6" fill="#14a896"/></svg>
<svg class="a" style="left:2056px;top:1343px" width="40" height="40" viewBox="0 0 40 40"><g fill="none" stroke="#14a896" stroke-width="2.5" stroke-linecap="round" stroke-linejoin="round"><path d="M1.3,1.3Q12,1.3 19.8,4.5Q27.5,1.3 38.5,1.3V28.5Q27.5,28.5 19.8,33Q12,28.5 1.3,28.5Z"/><path d="M19.8,4.5V33"/><path d="M1,31.5Q12,31.5 19.8,38Q27.5,31.5 38.7,31.5"/><path d="M5.3,7.5Q11,7 15.6,9.5M5.3,13.5Q11,13 15.6,15.5M5.3,19.5Q11,19 15.6,21.5"/><path d="M24.1,9.5Q29,7 34.5,7.5M24.1,15.5Q29,13 34.5,13.5M24.1,21.5Q29,19 34.5,19.5"/></g></svg>
<svg class="a" style="left:2117px;top:1343px" width="35" height="40" viewBox="0 0 35 40"><g fill="none" stroke="#14a896" stroke-width="2.5" stroke-linejoin="round"><path d="M29.3,15V9.8L19.5,1.3H2.7Q1.3,1.3 1.3,2.7V37.3Q1.3,38.7 2.7,38.7H27.9Q29.3,38.7 29.3,37.3V22"/><path d="M19.5,1.3V9.8H29.3"/><rect x="6" y="5.3" width="6.8" height="6.4"/><rect x="6" y="16.4" width="6.8" height="6.4"/><rect x="6" y="27.6" width="6.8" height="6.4"/><path d="M16.9,19L21.2,25.5L33.4,13.4" stroke-width="2.8"/></g></svg>
<div class="circ" style="left:2186.0px;top:1347.0px;width:32px;height:32px;background:#95aaa9"></div>
<div class="txt" style="left:2226px;top:1345px;font-size:28px;line-height:40px;color:#333;">68%</div>
<svg class="a" style="left:2290.0px;top:1349.0px" width="32" height="28" viewBox="0 0 32 28"><polygon points="16,0 32,28 0,28" fill="#d5dcdb"/></svg>
<div class="txt" style="left:2331px;top:1345px;font-size:28px;line-height:40px;color:#333;">12%</div>
<div class="circ" style="left:2552.0px;top:1347.0px;width:32px;height:32px;background:#11a594"></div>
<svg class="a" style="left:2845.0px;top:1349.0px" width="32" height="28" viewBox="0 0 32 28"><polygon points="16,0 32,28 0,28" fill="#e070f0"/></svg>
<svg class="a" style="left:3089.0px;top:1349.0px" width="32" height="28" viewBox="0 0 32 28"><polygon points="16,0 32,28 0,28" fill="#e070f0"/></svg>
<div class="txt" style="left:546px;top:968px;font-size:28px;line-height:40px;color:#333;letter-spacing:-0.5px">Elixir本体</div>
<svg class="a" style="left:675px;top:971px" width="54" height="33" viewBox="0 0 54 33"><rect x="1" y="1" width="52" height="31" rx="2.5" fill="none" stroke="#16b5a4" stroke-width="2"/><path d="M9,10V18.5Q9,21.5 12.3,21.5Q15.6,21.5 15.6,18.5V10" fill="none" stroke="#16b5a4" stroke-width="2.6"/><path d="M19.5,23V10.3H23.3Q26.6,10.3 26.6,13.4Q26.6,16.5 23.3,16.5H19.5" fill="none" stroke="#16b5a4" stroke-width="2.6"/><path d="M32.5,22.5L40.5,14.5" stroke="#16b5a4" stroke-width="3.6" stroke-linecap="round"/><path d="M48.2,6.5L34,10.8L44.2,21Z" fill="#16b5a4" stroke="#16b5a4" stroke-width="1" stroke-linejoin="round"/></svg>
<div class="txt" style="left:546px;top:1272px;font-size:28px;line-height:40px;color:#333;letter-spacing:-0.5px">Elixir本体</div>
<svg class="a" style="left:675px;top:1275px" width="54" height="33" viewBox="0 0 54 33"><rect x="1" y="1" width="52" height="31" rx="2.5" fill="none" stroke="#16b5a4" stroke-width="2"/><path d="M9,10V18.5Q9,21.5 12.3,21.5Q15.6,21.5 15.6,18.5V10" fill="none" stroke="#16b5a4" stroke-width="2.6"/><path d="M19.5,23V10.3H23.3Q26.6,10.3 26.6,13.4Q26.6,16.5 23.3,16.5H19.5" fill="none" stroke="#16b5a4" stroke-width="2.6"/><path d="M32.5,22.5L40.5,14.5" stroke="#16b5a4" stroke-width="3.6" stroke-linecap="round"/><path d="M48.2,6.5L34,10.8L44.2,21Z" fill="#16b5a4" stroke="#16b5a4" stroke-width="1" stroke-linejoin="round"/></svg>
<div class="txt" style="left:946px;top:968px;font-size:28px;line-height:40px;color:#333;letter-spacing:-1.2px">基本</div>
<div class="txt" style="left:946px;top:1120px;font-size:28px;line-height:40px;color:#333;letter-spacing:-1.2px">基本</div>
<div class="txt" style="left:946px;top:1272px;font-size:28px;line-height:40px;color:#333;letter-spacing:-1.2px">基本</div>
<div class="a" style="left:528px;top:868px;width:2px;height:533px;background:#95aaa9;"></div>
<div class="a" style="left:928px;top:868px;width:2px;height:533px;background:#95aaa9;"></div>
<div class="a" style="left:1328px;top:868px;width:2px;height:533px;background:#95aaa9;"></div>
<div class="a" style="left:2168px;top:868px;width:2px;height:533px;background:#95aaa9;"></div>
<div class="a" style="left:2403px;top:793px;width:2px;height:608px;background:#95aaa9;"></div>
<div class="a" style="left:2738px;top:793px;width:2px;height:608px;background:#95aaa9;"></div>
<div class="a" style="left:2982px;top:793px;width:2px;height:608px;background:#95aaa9;"></div>
<div class="a" style="left:3226px;top:793px;width:2px;height:608px;background:#95aaa9;"></div>
<div class="a" style="left:2403px;top:792px;width:825px;height:2px;background:#95aaa9;"></div>
<div class="a" style="left:2404px;top:867px;width:824px;height:2px;background:#2b2b2b;"></div>
<div class="a" style="left:2404px;top:943px;width:824px;height:2px;background:#2b2b2b;"></div>
<div class="a" style="left:1328px;top:1020px;width:1900px;height:2px;background:#2b2b2b;"></div>
<div class="a" style="left:928px;top:1096px;width:2300px;height:2px;background:#2b2b2b;"></div>
<div class="a" style="left:1328px;top:1172px;width:1900px;height:2px;background:#2b2b2b;"></div>
<div class="a" style="left:528px;top:1248px;width:2700px;height:2px;background:#2b2b2b;"></div>
<div class="a" style="left:1328px;top:1324px;width:1900px;height:2px;background:#2b2b2b;"></div>
<div class="a" style="left:528px;top:1400px;width:2700px;height:2px;background:#2b2b2b;"></div>

</body></html>
